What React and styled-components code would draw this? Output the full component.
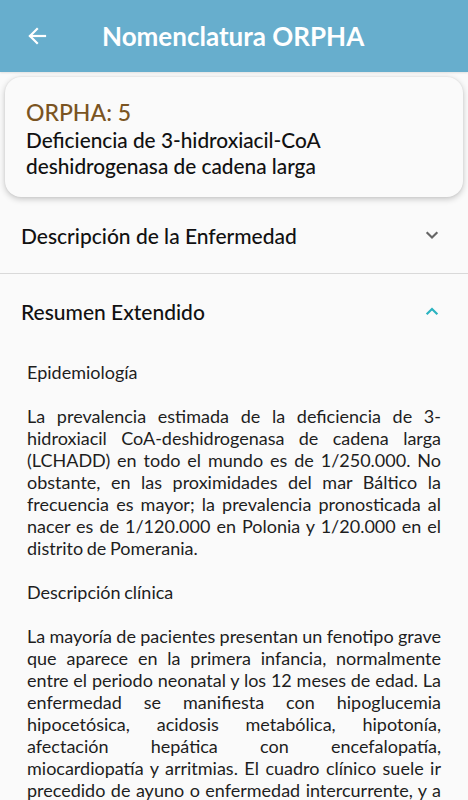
import React from "react";
import styled, { createGlobalStyle } from "styled-components";

const Global = createGlobalStyle`
  html, body { margin: 0; padding: 0; background: #fafafa; }
  body { font-family: Lato, "Open Sans", sans-serif; -webkit-font-smoothing: antialiased; }
  * { box-sizing: border-box; }
`;

const Page = styled.div`
  width: 468px;
  min-height: 800px;
  background: #fafafa;
  overflow: hidden;
`;

const AppBar = styled.header`
  height: 72px;
  background: #67aecd;
  display: flex;
  align-items: center;
  padding: 0 0 0 24px;
  box-shadow: 0 1px 2px rgba(0,0,0,0.1);
`;

const BackButton = styled.button`
  width: 26px;
  height: 26px;
  border: none;
  background: none;
  padding: 0;
  display: flex;
  align-items: center;
  justify-content: center;
  color: #fff;
  margin-right: 52px;
`;

const Title = styled.h1`
  margin: 0;
  color: #fff;
  font-family: Lato, sans-serif;
  font-weight: 700;
  font-size: 26px;
  letter-spacing: 0;
`;

const Card = styled.section`
  margin: 5px 5px 0 5px;
  background: #fafafa;
  border-radius: 16px;
  box-shadow: 0 2px 6px rgba(0,0,0,0.22), 0 0 2px rgba(0,0,0,0.08);
  padding: 22px 30px 16px 21px;
  min-height: 120px;
`;

const Code = styled.div`
  color: #7a5422;
  font-size: 23px;
  font-weight: 500;
  line-height: 27px;
`;

const Name = styled.div`
  color: #111;
  font-size: 20.8px;
  font-weight: 500;
  line-height: 26px;
  margin-top: 1px;
`;

const Section = styled.div`
  border-bottom: ${(p) => (p.$divider ? "1px solid #d9d9d9" : "none")};
`;

const SectionHead = styled.div`
  height: ${(p) => p.$h}px;
  display: flex;
  align-items: center;
  justify-content: space-between;
  padding: 0 26px 0 21px;
`;

const SectionTitle = styled.div`
  font-size: 21px;
  font-weight: 500;
  color: #111;
`;

const Body = styled.div`
  padding: 13px 27px 0 27px;
  font-size: 18px;
  line-height: 22px;
  word-spacing: -1px;
  color: #1e1e1e;
  text-align: justify;
  white-space: pre-line;
`;

const Chevron = ({ up, color }) => (
  <svg width="20" height="20" viewBox="0 0 24 24" fill="none" stroke={color} strokeWidth="2.6" strokeLinecap="square">
    {up ? <path d="M6.5 15l5.5-5.5 5.5 5.5" /> : <path d="M6.5 9.5l5.5 5.5 5.5-5.5" />}
  </svg>
);

const text = `Epidemiología

La prevalencia estimada de la deficiencia de 3-hidroxiacil CoA-deshidrogenasa de cadena larga (LCHADD) en todo el mundo es de 1/250.000. No obstante, en las proximidades del mar Báltico la frecuencia es mayor; la prevalencia pronosticada al nacer es de 1/120.000 en Polonia y 1/20.000 en el distrito de Pomerania.

Descripción clínica

La mayoría de pacientes presentan un fenotipo grave que aparece en la primera infancia, normalmente entre el periodo neonatal y los 12 meses de edad. La enfermedad se manifiesta con hipoglucemia hipocetósica, acidosis metabólica, hipotonía, afectación hepática con encefalopatía, miocardiopatía y arritmias. El cuadro clínico suele ir precedido de ayuno o enfermedad intercurrente, y a menudo se asocia a rabdomiólisis recurrente.`;

export default function App() {
  return (
    <Page>
      <Global />
      <AppBar>
        <BackButton aria-label="Volver">
          <svg width="24" height="24" viewBox="0 0 24 24" fill="none" stroke="#fff" strokeWidth="2.2" strokeLinecap="square">
            <path d="M20 12H5" />
            <path d="M12 5l-7 7 7 7" />
          </svg>
        </BackButton>
        <Title>Nomenclatura ORPHA</Title>
      </AppBar>
      <Card>
        <Code>ORPHA: 5</Code>
        <Name>Deficiencia de 3-hidroxiacil-CoA deshidrogenasa de cadena larga</Name>
      </Card>
      <Section $divider>
        <SectionHead $h={76}>
          <SectionTitle>Descripción de la Enfermedad</SectionTitle>
          <Chevron color="#666" />
        </SectionHead>
      </Section>
      <Section>
        <SectionHead $h={74}>
          <SectionTitle>Resumen Extendido</SectionTitle>
          <Chevron up color="#2bb3c0" />
        </SectionHead>
        <Body>{text}</Body>
      </Section>
    </Page>
  );
}
